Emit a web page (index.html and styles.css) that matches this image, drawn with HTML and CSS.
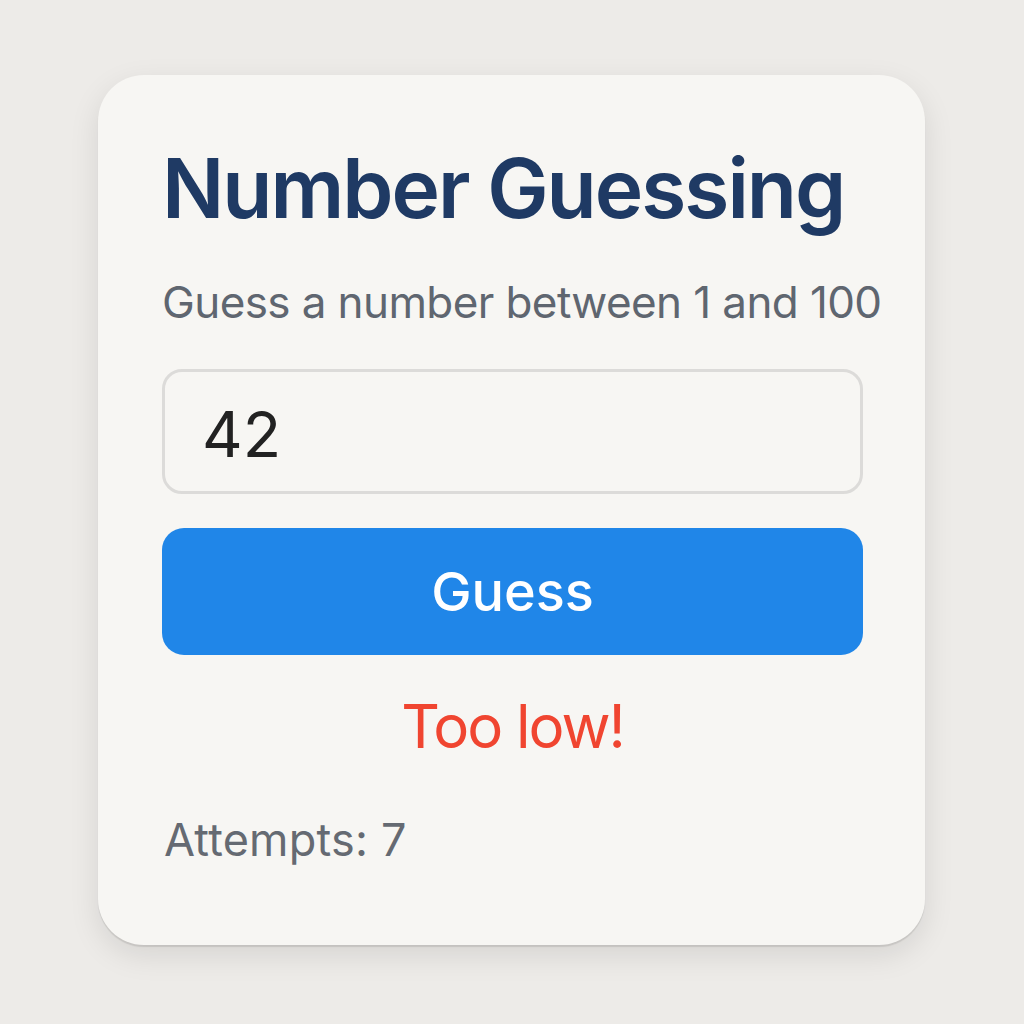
FILE: index.html
```html
<!DOCTYPE html>
<html>
<head>
<meta charset="utf-8">
<link rel="stylesheet" href="styles.css">
</head>
<body>
<div class="page">
  <div class="card">
    <h1 class="title">Number Guessing</h1>
    <p class="subtitle">Guess a number between 1 and 100</p>
    <div class="input">42</div>
    <button class="btn">Guess</button>
    <p class="feedback">Too low!</p>
    <p class="attempts">Attempts: 7</p>
  </div>
</div>
</body>
</html>
```
FILE: styles.css
```css
* { box-sizing: border-box; }
html, body { margin: 0; padding: 0; }
body {
  width: 1024px;
  height: 1024px;
  background: #edebe8;
  font-family: Inter, "Noto Sans", sans-serif;
}
.page {
  padding-top: 75px;
  padding-left: 98px;
}
.card {
  width: 827px;
  height: 870px;
  background: #f7f6f3;
  border-radius: 46px;
  box-shadow: 0 2px 1px rgba(0,0,0,0.10), 0 10px 30px rgba(0,0,0,0.10);
  padding: 0 62px 0 64px;
  display: flex;
  flex-direction: column;
}
.title {
  margin: 73px 0 0 0;
  font-size: 82px;
  font-weight: 600;
  color: #1f3a64;
  line-height: 1;
  letter-spacing: -2px;
  white-space: nowrap;
}
.subtitle {
  margin: 50px 0 0 0;
  font-size: 44px;
  color: #5f6670;
  line-height: 1;
  letter-spacing: -0.6px;
  white-space: nowrap;
}
.input {
  margin-top: 45px;
  height: 125px;
  border: 3px solid #dcdbd9;
  border-radius: 20px;
  padding: 5px 0 0 37px;
  display: flex;
  align-items: center;
  font-size: 63px;
  line-height: 1;
  color: #222;
}
.btn {
  margin-top: 34px;
  height: 127px;
  border: none;
  border-radius: 22px;
  background: #2086e8;
  color: #fff;
  font-family: Inter, sans-serif;
  font-size: 54px;
  font-weight: 500;
  line-height: 1;
  padding: 0;
}
.feedback {
  margin: 41px 0 0 0;
  text-align: center;
  font-size: 60px;
  color: #f04530;
  line-height: 1;
  letter-spacing: -2px;
}
.attempts {
  margin: 61px 0 0 2px;
  font-size: 45px;
  color: #656a72;
  line-height: 1;
  letter-spacing: 0.2px;
}
```
